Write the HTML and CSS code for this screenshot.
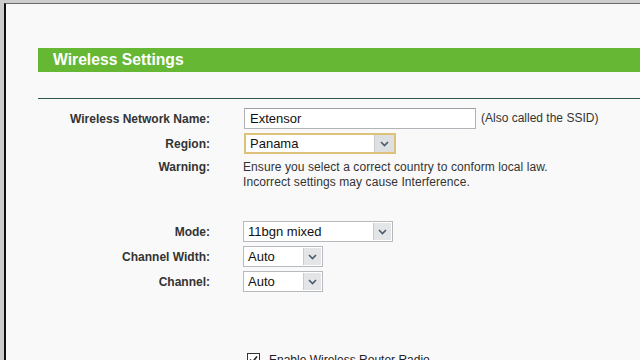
FILE: index.html
```html
<!DOCTYPE html>
<html lang="en">
<head>
    <meta charset="UTF-8">
    <title>Wireless Settings</title>
    <link rel="stylesheet" href="styles.css">
</head>
<body>
    <div class="frame">
        <h1 class="title">Wireless Settings</h1>
        <hr class="rule">

        <div class="rows">
            <div class="row">
                <label class="label">Wireless Network Name:</label>
                <div class="field">
                    <span class="input ssid">Extensor</span>
                    <span class="hint">(Also called the SSID)</span>
                </div>
            </div>

            <div class="row">
                <label class="label">Region:</label>
                <div class="field">
                    <span class="select focus region">
                        <span class="value">Panama</span>
                        <span class="arrow"><svg width="9" height="6" viewBox="0 0 9 6"><path d="M1 1 L4.5 4.5 L8 1" fill="none" stroke="#4a5a70" stroke-width="1.6"/></svg></span>
                    </span>
                </div>
            </div>

            <div class="row warn">
                <label class="label">Warning:</label>
                <p class="note">Ensure you select a correct country to conform local law.<br>Incorrect settings may cause Interference.</p>
            </div>

            <div class="row mode">
                <label class="label">Mode:</label>
                <div class="field">
                    <span class="select wide">
                        <span class="value">11bgn mixed</span>
                        <span class="arrow"><svg width="9" height="6" viewBox="0 0 9 6"><path d="M1 1 L4.5 4.5 L8 1" fill="none" stroke="#4a5a70" stroke-width="1.6"/></svg></span>
                    </span>
                </div>
            </div>

            <div class="row">
                <label class="label">Channel Width:</label>
                <div class="field">
                    <span class="select small">
                        <span class="value">Auto</span>
                        <span class="arrow"><svg width="9" height="6" viewBox="0 0 9 6"><path d="M1 1 L4.5 4.5 L8 1" fill="none" stroke="#4a5a70" stroke-width="1.6"/></svg></span>
                    </span>
                </div>
            </div>

            <div class="row">
                <label class="label">Channel:</label>
                <div class="field">
                    <span class="select small">
                        <span class="value">Auto</span>
                        <span class="arrow"><svg width="9" height="6" viewBox="0 0 9 6"><path d="M1 1 L4.5 4.5 L8 1" fill="none" stroke="#4a5a70" stroke-width="1.6"/></svg></span>
                    </span>
                </div>
            </div>

            <div class="row radio">
                <span class="label"></span>
                <div class="field">
                    <span class="check"><svg width="11" height="11" viewBox="0 0 11 11"><path d="M2 5.5 L4.5 8 L9 2.5" fill="none" stroke="#222" stroke-width="1.6"/></svg></span>
                    <span class="check-text">Enable Wireless Router Radio</span>
                </div>
            </div>
        </div>
    </div>
</body>
</html>
```

FILE: styles.css
```css
body {
    margin: 0;
    background: #cdcdcd;
    font-family: "Liberation Sans", Arial, sans-serif;
    font-size: 12px;
    color: #222;
    height: 360px;
    overflow: hidden;
}

.frame {
    margin: 3px 0 0 4px;
    height: 400px;
    background: #f9f9f9;
    border-top: 1px solid #6a6a6a;
    border-left: 2px solid #111;
    padding-left: 32px;
}

.title {
    margin: 44px 0 0;
    height: 24px;
    background: #66b834;
    color: #fff;
    font-size: 15.7px;
    font-weight: bold;
    line-height: 23px;
    padding-left: 15px;
}

.rule {
    margin: 26px 0 0;
    border: 0;
    border-top: 1px solid #2f5a48;
    height: 0;
}

.rows {
    display: flex;
    flex-direction: column;
    gap: 4px;
    padding-top: 9px;
}

.row {
    display: flex;
    align-items: center;
    min-height: 21px;
}

.label {
    width: 172px;
    flex: none;
    text-align: right;
    font-weight: bold;
    color: #333;
    margin-right: 33px;
}

.field {
    display: flex;
    align-items: center;
}

.input {
    box-sizing: border-box;
    height: 21px;
    border: 1px solid #b0b3b8;
    border-top-color: #9a9ea4;
    background: #fff;
    padding: 0 5px;
    line-height: 19px;
    font-size: 13px;
    color: #111;
    margin-left: 1px;
}

.ssid {
    width: 232px;
}

.hint {
    margin-left: 5px;
    color: #333;
    position: relative;
    top: -1px;
}

.select {
    box-sizing: border-box;
    display: flex;
    height: 21px;
    border: 1px solid #b6b9be;
    background: #fff;
    color: #111;
    font-size: 13px;
}

.select .value {
    flex: 1;
    padding-left: 4px;
    line-height: 19px;
}

.select .arrow {
    width: 17px;
    margin: 1px;
    background: #e4e5e7;
    border-left: 1px solid #c9cbcf;
    display: flex;
    align-items: center;
    justify-content: center;
}

.select.focus {
    margin-left: 1px;
    border: 2px solid #dcc27a;
    width: 152px;
}

.select.focus .value {
    line-height: 17px;
}

.select.focus .arrow {
    margin: 0;
    width: 19px;
    background: #dedfe1;
}

.wide {
    width: 150px;
}

.small {
    width: 80px;
}

.warn {
    align-items: flex-start;
    padding-top: 2px;
}

.note {
    margin: 0;
    line-height: 15px;
    color: #333;
    letter-spacing: 0.08px;
}

.warn .label {
    line-height: 15px;
}

.mode {
    margin-top: 27px;
}

.radio {
    margin-top: 53px;
}

.check {
    box-sizing: border-box;
    width: 13px;
    height: 13px;
    border: 1px solid #333;
    background: #fff;
    margin-left: 4px;
    display: flex;
    align-items: center;
    justify-content: center;
}

.check-text {
    margin-left: 9px;
}
```
